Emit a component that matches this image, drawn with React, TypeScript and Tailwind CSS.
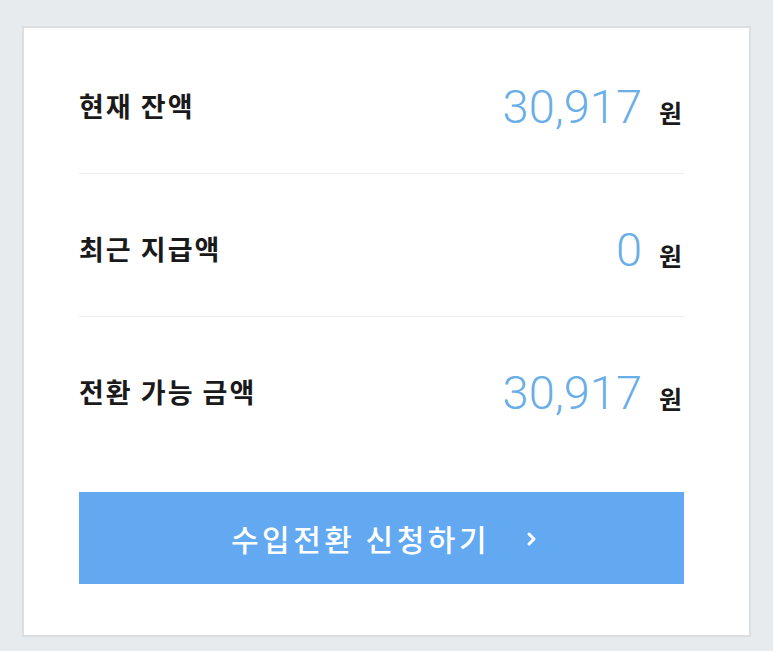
import React from 'react';

interface Row {
    label: string;
    amount: string;
}

const rows: Row[] = [
    { label: '현재 잔액', amount: '30,917' },
    { label: '최근 지급액', amount: '0' },
    { label: '전환 가능 금액', amount: '30,917' },
];

const kr = { fontFamily: '"Noto Sans CJK KR", "Noto Sans", sans-serif' };
const num = { fontFamily: 'Roboto, "Liberation Sans", sans-serif' };

export default function App() {
    return (
        <div className="min-h-[651px] w-[773px] bg-[#e8ebee] pt-[26px] pl-[22px]">
            <div className="w-[729px] h-[611px] bg-white border-2 border-[#dcdfe2] pl-[55px] pr-[65px] pt-[3px]">
                {rows.map((row, i) => (
                    <div
                        key={row.label}
                        className={`pt-[8px] flex items-center justify-between ${i < rows.length - 1 ? 'border-b border-[#eceef0] h-[143px]' : 'h-[142px]'}`}
                    >
                        <span className="text-[27px] font-bold text-[#1a1a1a] tracking-[2px]" style={kr}>
                            {row.label}
                        </span>
                        <div className="flex items-baseline gap-[17px] pr-[2px]">
                            <span className="text-[47px] font-light text-[#6aaee8] leading-none" style={num}>
                                {row.amount}
                            </span>
                            <span className="text-[25px] font-bold text-[#1a1a1a] leading-none" style={kr}>
                                원
                            </span>
                        </div>
                    </div>
                ))}
                <button className="mt-[33px] w-full h-[92px] bg-[#63a9f2] text-white flex items-center justify-center gap-[36px] pl-[6px]">
                    <span className="text-[30px] font-medium tracking-[3.5px]" style={kr}>수입전환 신청하기</span>
                    <svg width="12" height="14" viewBox="0 0 12 14" className="mt-[2px]">
                        <path d="M3 2 L8 7 L3 12" fill="none" stroke="white" strokeWidth="3" strokeLinecap="round" strokeLinejoin="round" />
                    </svg>
                </button>
            </div>
        </div>
    );
}
